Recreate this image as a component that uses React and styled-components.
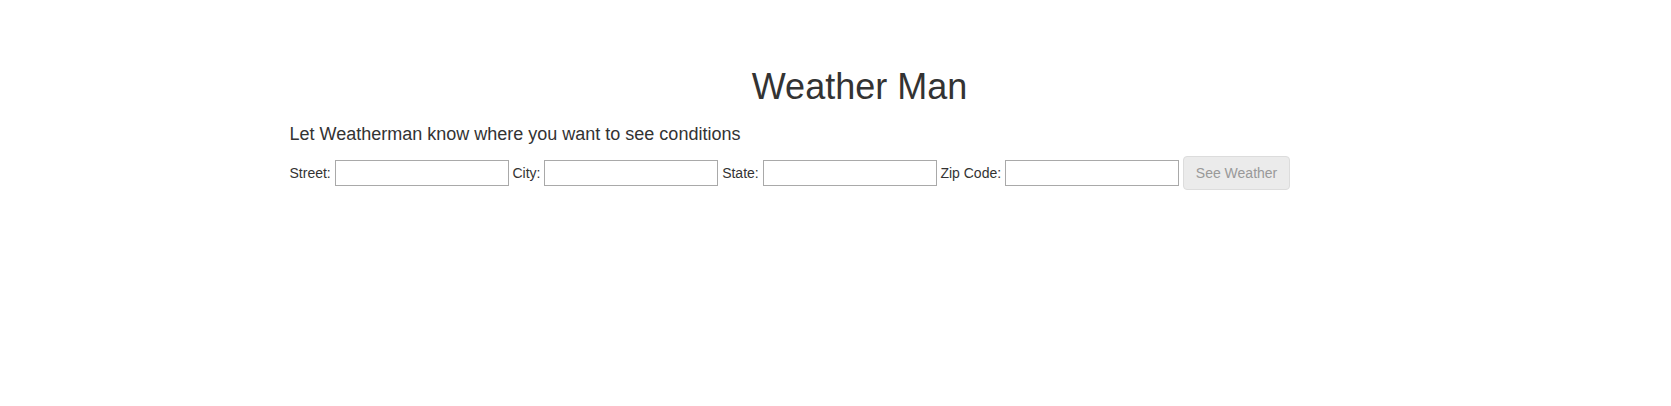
import React from 'react';
import styled, { createGlobalStyle } from 'styled-components';

const GlobalStyle = createGlobalStyle`
  body {
    margin: 0;
    background: #fff;
    color: #333;
    font-family: "Liberation Sans", Arial, Helvetica, sans-serif;
    font-size: 14px;
  }
`;

const Page = styled.div`
  padding: 67px 0 0 48px;
`;

const Container = styled.div`
  width: 1140px;
  margin: 0 auto;
  padding: 0 15px;
`;

const Title = styled.h1`
  margin: 0 0 17px;
  font-size: 36px;
  line-height: 40px;
  font-weight: 400;
  text-align: center;
`;

const Subtitle = styled.h4`
  margin: 0 0 12px;
  font-size: 18px;
  line-height: 20px;
  font-weight: 400;
`;

const Form = styled.form`
  display: flex;
  align-items: center;
  gap: 3.85px;
`;

const Label = styled.label`
  font-size: 14px;
  line-height: 20px;
  white-space: nowrap;
`;

const Field = styled.input`
  box-sizing: border-box;
  width: 174px;
  height: 26px;
  padding: 1px 2px;
  border: 1px solid #a9a9a9;
  border-radius: 0;
  font: 13px "Liberation Sans", Arial, sans-serif;
  color: #333;
  background: #fff;
  outline: none;
`;

const Button = styled.button`
  box-sizing: border-box;
  height: 34px;
  padding: 6px 12px;
  border: 1px solid #dcdcdc;
  border-radius: 4px;
  background: #ebebeb;
  color: #999;
  font: 14px/20px "Liberation Sans", Arial, sans-serif;
  cursor: not-allowed;
`;

const fields = [
  { id: 'street', label: 'Street:' },
  { id: 'city', label: 'City:' },
  { id: 'state', label: 'State:' },
  { id: 'zip', label: 'Zip Code:' },
];

export default function App() {
  return (
    <>
      <GlobalStyle />
      <Page>
        <Container>
          <Title>Weather Man</Title>
          <Subtitle>Let Weatherman know where you want to see conditions</Subtitle>
          <Form onSubmit={e => e.preventDefault()}>
            {fields.map(f => (
              <React.Fragment key={f.id}>
                <Label htmlFor={f.id}>{f.label}</Label>
                <Field id={f.id} type="text" />
              </React.Fragment>
            ))}
            <Button type="submit" disabled>See Weather</Button>
          </Form>
        </Container>
      </Page>
    </>
  );
}
